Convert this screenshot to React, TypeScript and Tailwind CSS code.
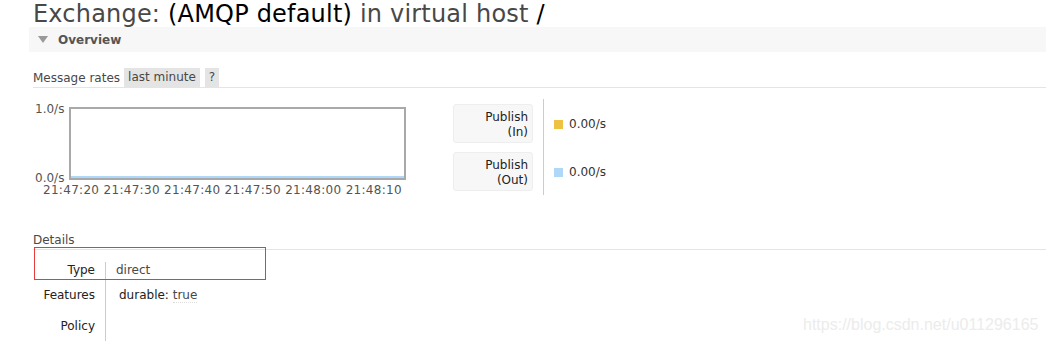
import React from "react";

const font = { fontFamily: '"DejaVu Sans", Verdana, sans-serif' };

function RateRow({ label, sub, color }: { label: string; sub: string; color: string }) {
  return (
    <div className="flex items-center h-[48px]">
      <div className="w-[80px] h-[39px] bg-[#f7f7f7] border border-[#eeeeee] rounded-[3px] flex flex-col items-end justify-center pt-[3px] pr-[4px] text-[12px] leading-[15px] text-[#222]">
        <span>{label}</span>
        <span>{sub}</span>
      </div>
      <div className="w-[10px]" />
      <div className="w-[1px] h-[48px] bg-[#cccccc]" />
      <div className="flex items-center ml-[10px] gap-[6px] text-[12px] text-[#333] mt-[2px]">
        <span className={`w-[9px] h-[9px] ${color}`} />
        <span>0.00/s</span>
      </div>
    </div>
  );
}

export default function App() {
  return (
    <div style={font} className="relative w-[1046px] h-[341px] bg-white overflow-hidden text-[#484848]">
      {/* title */}
      <h1 className="pl-[33px] h-[27px] text-[24px] leading-[27px] mt-[1px] -mb-[1px] text-[#484848] whitespace-nowrap tracking-[0.2px]">
        Exchange: <span className="text-black">(AMQP default)</span> in virtual host <span className="text-black">/</span>
      </h1>

      {/* overview bar */}
      <div className="ml-[29px] h-[25px] bg-[#f7f7f7] flex items-center">
        <svg width="10" height="7" viewBox="0 0 10 7" className="ml-[9px]">
          <polygon points="0,0 10,0 5,7" fill="#999" />
        </svg>
        <span className="ml-[10px] text-[12px] font-bold text-[#555]">Overview</span>
      </div>

      {/* message rates header */}
      <div className="ml-[33px] mt-[16px] flex items-center h-[20px] border-b border-[#e4e4e4] text-[12px]">
        <span className="mr-[4px] text-[#484848]">Message rates</span>
        <span className="bg-[#e4e4e4] px-[4px] h-[19px] leading-[19px] text-[#484848]">last minute</span>
        <span className="bg-[#e4e4e4] ml-[5px] px-[4px] h-[19px] leading-[19px] text-[#484848]">?</span>
      </div>

      <div className="flex mt-[12px] h-[100px]">
        {/* chart */}
        <div className="ml-[35px] w-[380px] mt-[2px]">
          <div className="flex">
            <div className="w-[34px] h-[83px] flex flex-col justify-between text-[12px] text-[#545454] leading-[14px]">
              <span>1.0/s</span>
              <span>0.0/s</span>
            </div>
            <div className="w-[337px] h-[73px] mt-[5px] border-2 border-[#a9a9a9] flex flex-col justify-end">
              <div className="h-[2px] bg-[#afd8f8]" />
            </div>
          </div>
          <div className="flex justify-between w-[359px] ml-[8px] text-[12px] leading-[14px] text-[#545454] -mt-[2px] tracking-[0.3px]">
            {["21:47:20", "21:47:30", "21:47:40", "21:47:50", "21:48:00", "21:48:10"].map((t) => (
              <span key={t}>{t}</span>
            ))}
          </div>
        </div>

        {/* legend */}
        <div className="ml-[38px] -mt-[1px]">
          <RateRow label="Publish" sub="(In)" color="bg-[#edc240]" />
          <RateRow label="Publish" sub="(Out)" color="bg-[#afd8f8]" />
        </div>
      </div>

      {/* details */}
      <div className="ml-[33px] mt-[31px] h-[19px] pt-[2px] border-b border-[#e4e4e4] text-[12px] leading-[14px] text-[#484848]">
        Details
      </div>
      <div className="flex text-[12px] mt-[13px]">
        <div className="ml-[33px] w-[62px] flex flex-col items-end text-[#222] leading-[14px]">
          <span className="h-[25px]">Type</span>
          <span className="h-[31px]">Features</span>
          <span className="h-[20px]">Policy</span>
        </div>
        <div className="w-[1px] bg-[#cccccc] ml-[10px] h-[80px] -mt-[1px]" />
        <div className="flex flex-col ml-[10px] leading-[14px]">
          <span className="h-[25px] text-[#484848]">direct</span>
          <span className="h-[31px] ml-[3px] text-[#222]">
            durable: <span className="text-[#484848] border-b border-dotted border-[#ddd]">true</span>
          </span>
        </div>
      </div>

      {/* annotation box */}
      <div className="absolute left-[34px] top-[247px] w-[232px] h-[33px] border border-[#e83c3c]" />

      {/* watermark */}
      <div
        className="absolute left-[803px] top-[313px] text-[16px] text-[#ececec]"
        style={{ fontFamily: '"Liberation Sans", Arial, sans-serif' }}
      >
        https://blog.csdn.net/u011296165
      </div>
    </div>
  );
}
